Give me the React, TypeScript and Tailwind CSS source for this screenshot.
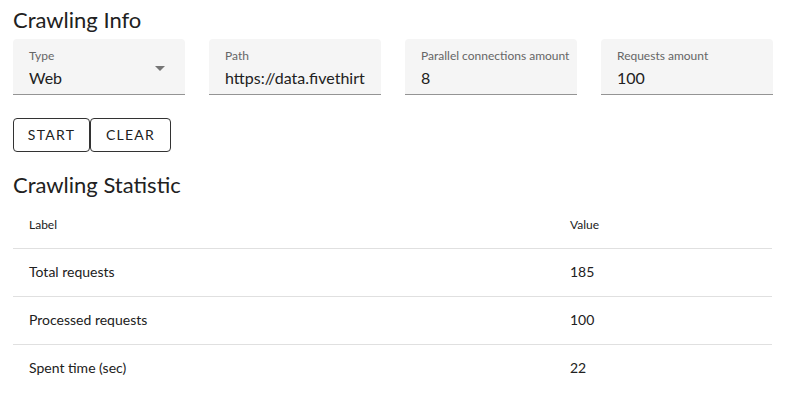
export default function App() {
  const fields = [
    { label: "Type", value: "Web", select: true },
    { label: "Path", value: "https://data.fivethirtyeight.com/" },
    { label: "Parallel connections amount", value: "8" },
    { label: "Requests amount", value: "100" },
  ];
  const rows = [
    ["Total requests", "185"],
    ["Processed requests", "100"],
    ["Spent time (sec)", "22"],
  ];
  return (
    <main
      className="w-full min-h-screen bg-white text-[#212121] px-[13px]"
      style={{ fontFamily: 'Lato, "Open Sans", sans-serif' }}
    >
      <h1 className="text-[22px] leading-8 pt-[4px] h-[39px]">Crawling Info</h1>
      <div className="flex gap-6 w-[760px]">
        {fields.map((f) => (
          <div
            key={f.label}
            className="relative w-[172px] h-[56px] bg-[#f5f5f5] rounded-t border-b border-[#949494] px-4 pt-[9px] overflow-hidden"
          >
            <div className="text-xs leading-4 text-[#666] whitespace-nowrap">{f.label}</div>
            <div className="text-base leading-6 mt-[2px] whitespace-nowrap overflow-hidden">
              {f.value}
            </div>
            {f.select && (
              <div className="absolute right-[20px] top-[27px] w-0 h-0 border-l-[5px] border-r-[5px] border-t-[5px] border-l-transparent border-r-transparent border-t-[#757575]" />
            )}
          </div>
        ))}
      </div>
      <div className="flex mt-[23px]">
        <button className="w-[77px] h-[34px] border border-[#333] rounded text-sm tracking-[1.25px] uppercase">
          Start
        </button>
        <button className="w-[81px] h-[34px] border border-[#333] rounded text-sm tracking-[1.25px] uppercase">
          Clear
        </button>
      </div>
      <h2 className="text-[22px] leading-8 mt-[17px]">Crawling Statistic</h2>
      <table className="w-[759px] mt-[2px] border-collapse text-sm">
        <thead>
          <tr className="border-b border-[#e0e0e0] h-[45px]">
            <th className="text-left font-normal text-xs pl-4 w-[541px]">Label</th>
            <th className="text-left font-normal text-xs pl-4">Value</th>
          </tr>
        </thead>
        <tbody>
          {rows.map(([l, v], i) => (
            <tr key={l} className={`h-[48px] ${i < rows.length - 1 ? "border-b border-[#e0e0e0]" : ""}`}>
              <td className="pl-4">{l}</td>
              <td className="pl-4">{v}</td>
            </tr>
          ))}
        </tbody>
      </table>
    </main>
  );
}
